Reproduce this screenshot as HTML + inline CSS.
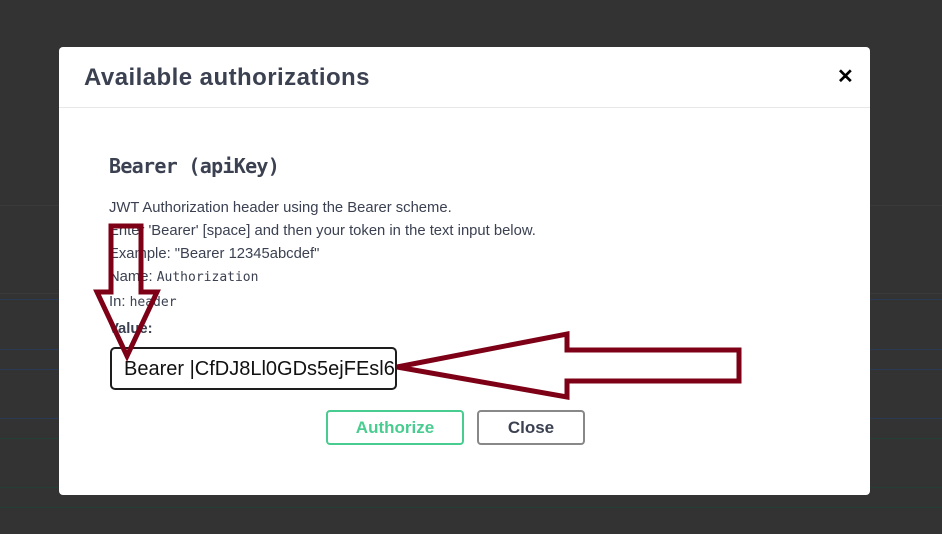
<!DOCTYPE html>
<html><head><style>
body{margin:0;width:942px;height:534px;background:#333;position:relative;overflow:hidden;font-family:"Liberation Sans",sans-serif}
.l{position:absolute;left:0;width:942px;height:1px}
.m{position:absolute;left:59px;top:47px;width:811px;height:448px;background:#fff;border-radius:4px}
.t{position:absolute;left:25px;top:17px;font-size:24px;font-weight:bold;color:#3b4151;letter-spacing:0.45px}
.hb{position:absolute;left:0;top:60px;width:811px;height:1px;background:#e8e8e8}
.x{position:absolute;left:778px;top:17px;font-size:20px;font-weight:bold}
.h{position:absolute;left:50px;top:107px;font-size:20px;font-weight:bold;color:#3b4151;font-family:"DejaVu Sans Mono",monospace;letter-spacing:-0.7px}
.p{position:absolute;left:50px;font-size:14.8px;color:#3b4151}
.mono{font-family:"DejaVu Sans Mono",monospace;font-size:13px}
.in{position:absolute;left:51px;top:300px;width:287px;height:43px;border:2px solid #1d1d1d;border-radius:5px;box-sizing:border-box;font-size:20px;padding:9px 12px;color:#111;white-space:nowrap;overflow:hidden}
.b{position:absolute;top:363px;height:35px;border:2px solid;border-radius:4px;box-sizing:border-box;font-size:17px;font-weight:bold;text-align:center;line-height:31px}
</style></head><body>
<div class="l" style="top:205px;background:#3a3a3a"></div>
<div class="l" style="top:293px;background:#3a3a3a"></div>
<div class="l" style="top:299px;background:#2a3a55"></div>
<div class="l" style="top:349px;background:#2a3a55"></div>
<div class="l" style="top:369px;background:#2a3a55"></div>
<div class="l" style="top:418px;background:#2a3a55"></div>
<div class="l" style="top:438px;background:#244036"></div>
<div class="l" style="top:487px;background:#244036"></div>
<div class="l" style="top:507px;background:#244036"></div>
<div class="m">
<div class="t">Available authorizations</div>
<div class="x">✕</div>
<div class="hb"></div>
<div class="h">Bearer (apiKey)</div>
<div class="p" style="top:153px">JWT Authorization header using the Bearer scheme.</div>
<div class="p" style="top:176px">Enter 'Bearer' [space] and then your token in the text input below.</div>
<div class="p" style="top:199px">Example: "Bearer 12345abcdef"</div>
<div class="p" style="top:222px">Name: <span class="mono">Authorization</span></div>
<div class="p" style="top:247px">In: <span class="mono">header</span></div>
<div class="p" style="top:274px;font-weight:bold">Value:</div>
<div class="in">Bearer |CfDJ8Ll0GDs5ejFEsl6</div>
<div class="b" style="left:267px;width:138px;border-color:#49cc90;color:#49cc90">Authorize</div>
<div class="b" style="left:418px;width:108px;border-color:#888;color:#3b4151">Close</div>
</div>
<svg style="position:absolute;left:0;top:0" width="942" height="534">
<polygon points="111,226 141,226 141,292 157,292 127,356 97,292 111,292" fill="none" stroke="#7d0016" stroke-width="5"/>
<polygon points="397,367 567,334 567,350 739,350 739,381 567,381 567,397" fill="none" stroke="#7d0016" stroke-width="5"/>
</svg>
</body></html>
